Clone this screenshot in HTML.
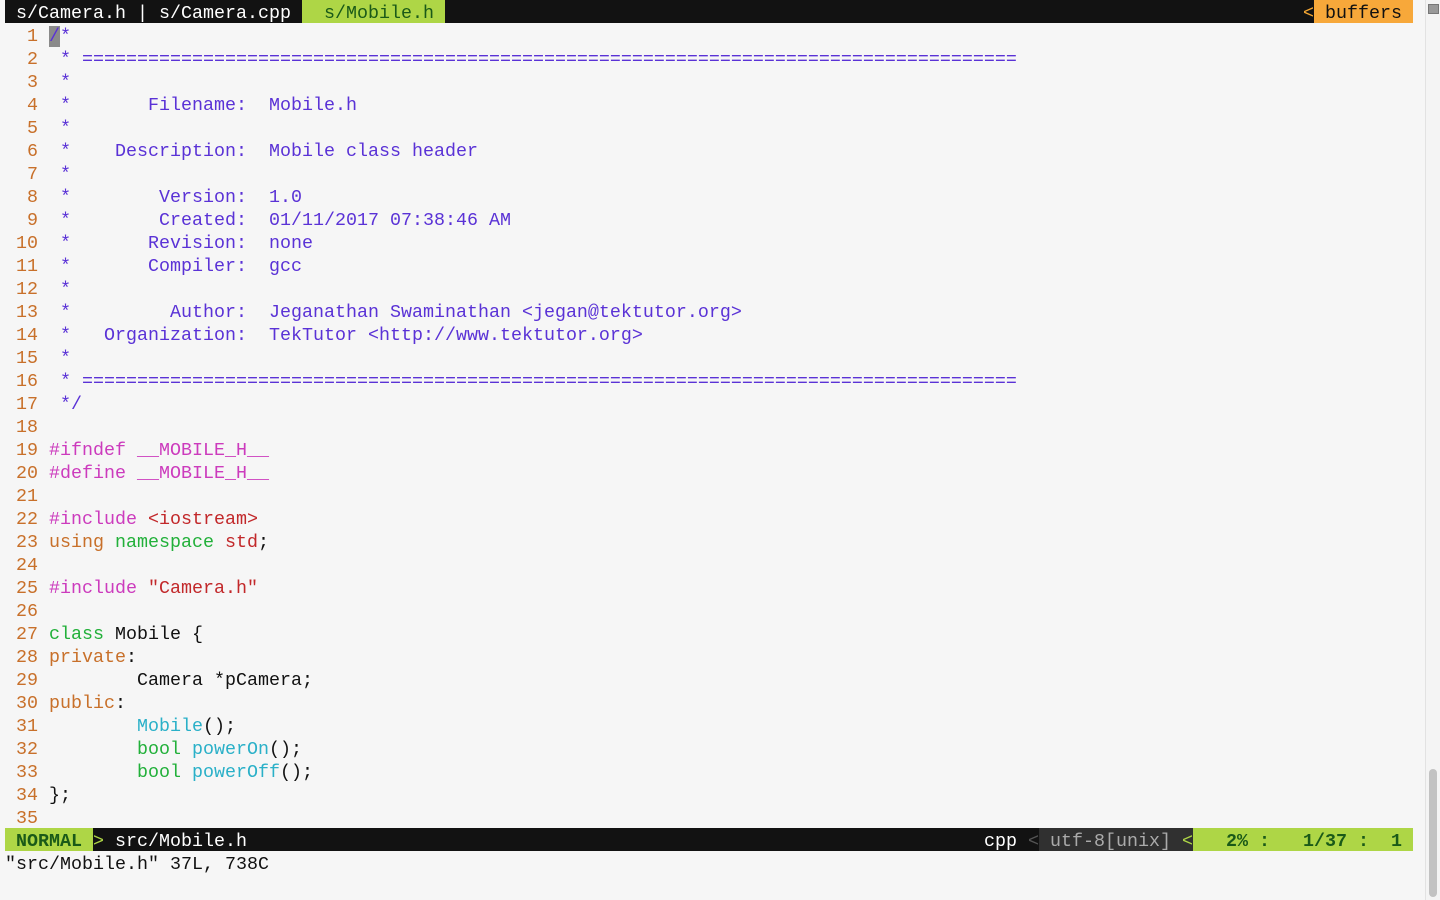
<!DOCTYPE html>
<html><head><meta charset="utf-8"><style>
html,body{margin:0;padding:0;width:1440px;height:900px;background:#f6f6f6;overflow:hidden}
.w{position:absolute;left:5px;top:0;font-family:"Liberation Mono",monospace;font-size:18.33px;line-height:27px;color:#111}
.l,.tab,.sl{height:23px;white-space:pre;position:relative}
.n{color:#c8702a}
.c{color:#5a32d6}
.p{color:#cc3bbd}
.s{color:#c2282a}
.k{color:#22b03a}
.o{color:#c8702a}
.f{color:#2ab0c8}
.tab{background:#121212;color:#fff;width:1408px}
.sl{background:#121212;color:#fff;width:1408px}
.ab{position:absolute;top:0;height:23px;white-space:pre}
.cur{background:#8a8a8a;color:#5a32d6}
.sb{position:absolute;left:1425px;top:0;width:15px;height:900px;background:#f4f4f4;border-left:1px solid #e2e2e2}
.th{position:absolute;left:1429px;top:769px;width:8px;height:128px;background:#c2c2c2;border-radius:4px}
.tb{position:absolute;left:1428px;top:4px;width:9px;height:8px;border:1px solid #777;background:#999}
</style></head><body>
<div class="w"><div class="tab"> s/Camera.h | s/Camera.cpp <span class="ab" style="left:297px;width:143px;background:#aed646;color:#1a5a18">  s/Mobile.h </span><span class="ab" style="left:1298px;color:#f5a733">&lt;</span><span class="ab" style="left:1309px;width:99px;background:#f7a83a;color:#111"> buffers </span></div><div class="l"><span class="n">  1 </span><span class="cur">/</span><span class="c">*</span></div><div class="l"><span class="n">  2 </span><span class="c"> * =====================================================================================</span></div><div class="l"><span class="n">  3 </span><span class="c"> *</span></div><div class="l"><span class="n">  4 </span><span class="c"> *       Filename:  Mobile.h</span></div><div class="l"><span class="n">  5 </span><span class="c"> *</span></div><div class="l"><span class="n">  6 </span><span class="c"> *    Description:  Mobile class header</span></div><div class="l"><span class="n">  7 </span><span class="c"> *</span></div><div class="l"><span class="n">  8 </span><span class="c"> *        Version:  1.0</span></div><div class="l"><span class="n">  9 </span><span class="c"> *        Created:  01/11/2017 07:38:46 AM</span></div><div class="l"><span class="n"> 10 </span><span class="c"> *       Revision:  none</span></div><div class="l"><span class="n"> 11 </span><span class="c"> *       Compiler:  gcc</span></div><div class="l"><span class="n"> 12 </span><span class="c"> *</span></div><div class="l"><span class="n"> 13 </span><span class="c"> *         Author:  Jeganathan Swaminathan &lt;jegan@tektutor.org&gt;</span></div><div class="l"><span class="n"> 14 </span><span class="c"> *   Organization:  TekTutor &lt;http://www.tektutor.org&gt;</span></div><div class="l"><span class="n"> 15 </span><span class="c"> *</span></div><div class="l"><span class="n"> 16 </span><span class="c"> * =====================================================================================</span></div><div class="l"><span class="n"> 17 </span><span class="c"> */</span></div><div class="l"><span class="n"> 18 </span></div><div class="l"><span class="n"> 19 </span><span class="p">#ifndef __MOBILE_H__</span></div><div class="l"><span class="n"> 20 </span><span class="p">#define __MOBILE_H__</span></div><div class="l"><span class="n"> 21 </span></div><div class="l"><span class="n"> 22 </span><span class="p">#include </span><span class="s">&lt;iostream&gt;</span></div><div class="l"><span class="n"> 23 </span><span class="o">using</span> <span class="k">namespace</span> <span class="s">std</span>;</div><div class="l"><span class="n"> 24 </span></div><div class="l"><span class="n"> 25 </span><span class="p">#include </span><span class="s">"Camera.h"</span></div><div class="l"><span class="n"> 26 </span></div><div class="l"><span class="n"> 27 </span><span class="k">class</span> Mobile {</div><div class="l"><span class="n"> 28 </span><span class="o">private</span>:</div><div class="l"><span class="n"> 29 </span>        Camera *pCamera;</div><div class="l"><span class="n"> 30 </span><span class="o">public</span>:</div><div class="l"><span class="n"> 31 </span>        <span class="f">Mobile</span>();</div><div class="l"><span class="n"> 32 </span>        <span class="k">bool</span> <span class="f">powerOn</span>();</div><div class="l"><span class="n"> 33 </span>        <span class="k">bool</span> <span class="f">powerOff</span>();</div><div class="l"><span class="n"> 34 </span>};</div><div class="l"><span class="n"> 35 </span></div><div class="sl"><span class="ab" style="left:0;width:88px;background:#aed646;color:#1a5a18;font-weight:bold"> NORMAL </span><span class="ab" style="left:88px;color:#aed646">&gt;</span><span class="ab" style="left:99px"> src/Mobile.h</span><span class="ab" style="left:979px">cpp</span><span class="ab" style="left:1023px;color:#555">&lt;</span><span class="ab" style="left:1034px;width:154px;background:#303030;color:#aaa"> utf-8[unix] <span style="color:#aed646">&lt;</span></span><span class="ab" style="left:1188px;width:220px;background:#aed646;color:#1a5a18;font-weight:bold">   2% :   1/37 :  1</span></div><div class="l">"src/Mobile.h" 37L, 738C</div></div>
<div class="sb"></div><div class="tb"></div><div class="th"></div>
</body></html>
